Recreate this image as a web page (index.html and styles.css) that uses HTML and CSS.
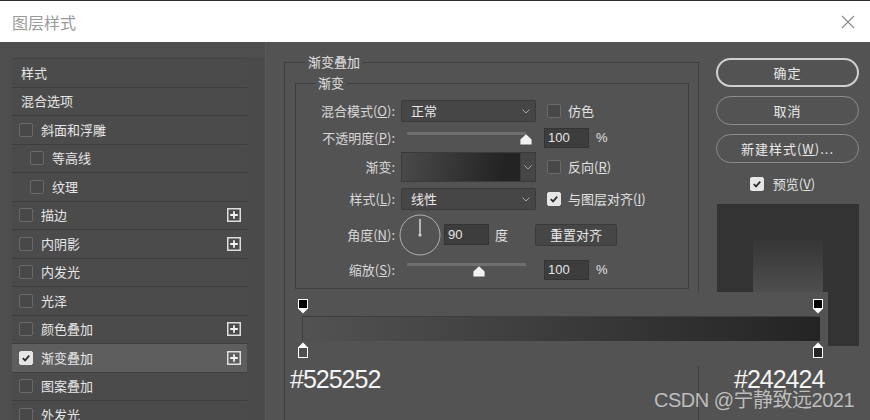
FILE: index.html
```html
<!DOCTYPE html>
<html lang="zh">
<head>
<meta charset="utf-8">
<title>图层样式</title>
<link rel="stylesheet" href="styles.css">
</head>
<body>
<header class="titlebar">
  <span class="title">图层样式</span>
  <svg class="close" viewBox="0 0 14 14"><path d="M1 1 L13 13 M13 1 L1 13" stroke="#8a8a8a" stroke-width="1.1" fill="none"/></svg>
</header>

<div class="main">
  <aside class="left">
    <ul class="list">
      <li class="item plain">样式</li>
      <li class="item plain">混合选项</li>
      <li class="item"><span class="cb"></span><span class="name">斜面和浮雕</span></li>
      <li class="item sub"><span class="cb"></span><span class="name">等高线</span></li>
      <li class="item sub"><span class="cb"></span><span class="name">纹理</span></li>
      <li class="item"><span class="cb"></span><span class="name">描边</span><svg class="plus" viewBox="0 0 14 14"><rect x="0.75" y="0.75" width="12.5" height="12.5" fill="none" stroke="#dedede" stroke-width="1.5"/><path d="M7 3.2 V10.8 M3.2 7 H10.8" stroke="#f2f2f2" stroke-width="1.8"/></svg></li>
      <li class="item"><span class="cb"></span><span class="name">内阴影</span><svg class="plus" viewBox="0 0 14 14"><rect x="0.75" y="0.75" width="12.5" height="12.5" fill="none" stroke="#dedede" stroke-width="1.5"/><path d="M7 3.2 V10.8 M3.2 7 H10.8" stroke="#f2f2f2" stroke-width="1.8"/></svg></li>
      <li class="item"><span class="cb"></span><span class="name">内发光</span></li>
      <li class="item"><span class="cb"></span><span class="name">光泽</span></li>
      <li class="item"><span class="cb"></span><span class="name">颜色叠加</span><svg class="plus" viewBox="0 0 14 14"><rect x="0.75" y="0.75" width="12.5" height="12.5" fill="none" stroke="#dedede" stroke-width="1.5"/><path d="M7 3.2 V10.8 M3.2 7 H10.8" stroke="#f2f2f2" stroke-width="1.8"/></svg></li>
      <li class="item active"><span class="cb on"><svg viewBox="0 0 14 14"><path d="M3.2 7.2 L5.9 9.8 L10.8 4.3" fill="none" stroke="#2c2c2c" stroke-width="2"/></svg></span><span class="name">渐变叠加</span><svg class="plus" viewBox="0 0 14 14"><rect x="0.75" y="0.75" width="12.5" height="12.5" fill="none" stroke="#dedede" stroke-width="1.5"/><path d="M7 3.2 V10.8 M3.2 7 H10.8" stroke="#f2f2f2" stroke-width="1.8"/></svg></li>
      <li class="item"><span class="cb"></span><span class="name">图案叠加</span></li>
      <li class="item"><span class="cb"></span><span class="name">外发光</span></li>
    </ul>
    <div class="scroll"></div>
  </aside>

  <section class="middle">
    <fieldset class="outer">
      <legend>渐变叠加</legend>
      <fieldset class="inner">
        <legend>渐变</legend>
        <div class="rows">
          <div class="row r1">
            <span class="lbl">混合模式(<u>O</u>):</span>
            <div class="select"><span>正常</span><svg class="chev" viewBox="0 0 8 5"><path d="M0.5 0.5 L4 4 L7.5 0.5" fill="none" stroke="#a8a8a8" stroke-width="1"/></svg></div>
            <span class="cb mid"></span><span class="opt">仿色</span>
          </div>
          <div class="row r2">
            <span class="lbl">不透明度(<u>P</u>):</span>
            <div class="slider"><div class="track"></div><svg class="thumb" style="left:119px" viewBox="0 0 12 11"><path d="M6 0.3 L11.6 5.5 V10.6 H0.4 V5.5 Z" fill="#f2f2f2"/></svg></div>
            <span class="num">100</span><span class="unit">%</span>
          </div>
          <div class="row r3">
            <span class="lbl">渐变:</span>
            <div class="gradbox"><div class="swatch"></div><div class="gchev"><svg class="chev" viewBox="0 0 8 5"><path d="M0.5 0.5 L4 4 L7.5 0.5" fill="none" stroke="#a8a8a8" stroke-width="1"/></svg></div></div>
            <span class="cb mid"></span><span class="opt">反向(<u>R</u>)</span>
          </div>
          <div class="row r4">
            <span class="lbl">样式(<u>L</u>):</span>
            <div class="select"><span>线性</span><svg class="chev" viewBox="0 0 8 5"><path d="M0.5 0.5 L4 4 L7.5 0.5" fill="none" stroke="#a8a8a8" stroke-width="1"/></svg></div>
            <span class="cb mid on"><svg viewBox="0 0 14 14"><path d="M3.2 7.2 L5.9 9.8 L10.8 4.3" fill="none" stroke="#2c2c2c" stroke-width="2"/></svg></span><span class="opt">与图层对齐(<u>I</u>)</span>
          </div>
          <div class="row r5">
            <span class="lbl">角度(<u>N</u>):</span>
            <svg class="dial" viewBox="0 0 42 42"><circle cx="21" cy="21" r="20" fill="none" stroke="#b0b0b0" stroke-width="1"/><path d="M21 21 V5" stroke="#cfcfcf" stroke-width="1.6"/><circle cx="21" cy="21" r="1.6" fill="#cfcfcf"/></svg>
            <span class="num n90">90</span><span class="deg">度</span>
            <span class="btn-reset">重置对齐</span>
          </div>
          <div class="row r6">
            <span class="lbl">缩放(<u>S</u>):</span>
            <div class="slider"><div class="track"></div><svg class="thumb" style="left:72px" viewBox="0 0 12 11"><path d="M6 0.3 L11.6 5.5 V10.6 H0.4 V5.5 Z" fill="#f2f2f2"/></svg></div>
            <span class="num">100</span><span class="unit">%</span>
          </div>
        </div>
      </fieldset>
    </fieldset>
  </section>

  <aside class="right">
    <button class="pill primary">确定</button>
    <button class="pill">取消</button>
    <button class="pill">新建样式(<u>W</u>)...</button>
    <div class="preview-row"><span class="cb on"><svg viewBox="0 0 14 14"><path d="M3.2 7.2 L5.9 9.8 L10.8 4.3" fill="none" stroke="#2c2c2c" stroke-width="2"/></svg></span><span>预览(<u>V</u>)</span></div>
    <div class="preview"><div class="layer"></div></div>
  </aside>
</div>

<div class="editor">
  <div class="stops top">
    <svg class="stop" viewBox="0 0 12 15"><rect x="1.5" y="0.5" width="9" height="9" fill="#000" stroke="#fff" stroke-width="1"/><path d="M1.5 10 H10.5 L6 14.5 Z" fill="#fff"/></svg>
    <svg class="stop" viewBox="0 0 12 15"><rect x="1.5" y="0.5" width="9" height="9" fill="#000" stroke="#fff" stroke-width="1"/><path d="M1.5 10 H10.5 L6 14.5 Z" fill="#fff"/></svg>
  </div>
  <div class="bar"></div>
  <div class="stops bottom">
    <svg class="stop" viewBox="0 0 12 16"><path d="M6 0.5 L10.5 5 H1.5 Z" fill="#fff"/><rect x="1.5" y="5.5" width="9" height="10" fill="#4f4f4f" stroke="#fff" stroke-width="1"/></svg>
    <svg class="stop" viewBox="0 0 12 16"><path d="M6 0.5 L10.5 5 H1.5 Z" fill="#fff"/><rect x="1.5" y="5.5" width="9" height="10" fill="#262626" stroke="#fff" stroke-width="1"/></svg>
  </div>
</div>

<div class="hex hex-a">#525252</div>
<div class="hex hex-b">#242424</div>
<div class="watermark">CSDN @宁静致远2021</div>
</body>
</html>
```

FILE: styles.css
```css
* { box-sizing: border-box; margin: 0; padding: 0; }
html, body { width: 870px; height: 420px; overflow: hidden; }
body {
  position: relative;
  background: #535353;
  font-family: "Noto Sans CJK SC", "Noto Sans", sans-serif;
  font-size: 13px;
  line-height: 16px;
  color: #e2e2e2;
}
u { text-decoration: underline; text-underline-offset: 1px; }

/* title bar */
.titlebar {
  height: 42px;
  background: #ffffff;
  border-top: 1px solid #2e2e2e;
  display: flex;
  align-items: center;
  justify-content: space-between;
  padding: 0 15px 0 12px;
}
.title { font-size: 16px; line-height: 20px; color: #9a9a9a; }
.close { width: 14px; height: 14px; }

.main { display: flex; height: 378px; }

/* left list */
.left {
  width: 266px;
  display: flex;
  padding: 16px 0 0 12px;
  background: #4e4e4e;
  border-right: 1px solid #5a5a5a;
}
.list {
  list-style: none;
  width: 235px;
  border-top: 1px solid #444;
}
.item {
  height: 28.5px;
  display: flex;
  align-items: center;
  padding: 0 6px 0 7px;
  background: #4b4b4b;
  border-bottom: 1px solid #3d3d3d;
  color: #e6e6e6;
}
.item.plain { padding-left: 9px; }
.item.sub { padding-left: 18px; }
.item.active { background: #5e5e5e; }
.item .name { flex: 1; margin-left: 8px; }
.plus { width: 14px; height: 14px; }
.scroll { width: 18px; background: #4a4a4a; }

.cb {
  width: 14px;
  height: 14px;
  flex: none;
  border: 1px solid #6a6a6a;
  border-radius: 2px;
  background: #484848;
  display: flex;
}
.cb svg { width: 12px; height: 12px; }
.cb.on { background: #e6e6e6; border-color: #e6e6e6; }

/* middle */
.middle { padding: 12px 0 0 18px; }
fieldset { border: 1px solid #3e3e3e; min-width: 0; }
legend { font-size: 13px; line-height: 16px; padding: 0 3px; color: #e2e2e2; }
.outer { width: 415px; height: 380px; padding: 0 9px 0 10px; }
.outer > legend { margin-left: 10px; }
.inner { margin-top: 5px; width: 394px; }
.inner > legend { margin-left: 19px; }
.rows { display: flex; flex-direction: column; padding: 9px 0 8px; }
.row { display: flex; align-items: center; }
.r1 { height: 22px; }
.r2 { height: 20px; margin-top: 6px; align-items: flex-start; }
.r3 { height: 30px; margin-top: 4px; }
.r4 { height: 22px; margin-top: 6px; }
.r5 { height: 41px; margin-top: 4px; }
.r6 { height: 20px; margin-top: 5px; align-items: flex-start; }
.lbl { width: 99px; margin-right: 6px; text-align: right; color: #d8d8d8; flex: none; }
.r2 .lbl, .r6 .lbl { line-height: 20px; }

.select {
  width: 135px;
  height: 22px;
  display: flex;
  align-items: center;
  justify-content: space-between;
  padding: 0 5px 0 9px;
  background: #464646;
  border: 1px solid #3b3b3b;
  border-radius: 2px;
  color: #e8e8e8;
}
.chev { width: 8px; height: 5px; }
.cb.mid { margin-left: 11px; }
.opt { margin-left: 7px; color: #e2e2e2; }

.slider { position: relative; width: 135px; height: 20px; }
.track { width: 119px; height: 3px; margin: 4px 0 0 6px; background: #6f6f6f; border-radius: 1px; }
.r6 .track { margin-top: 3px; }
.thumb { position: absolute; top: 6px; width: 12px; height: 11px; }
.num {
  width: 45px;
  height: 20px;
  margin-left: 8px;
  padding-left: 3px;
  background: #3d3d3d;
  border: 1px solid #343434;
  font-family: "Liberation Sans", Arial, sans-serif;
  font-size: 13px;
  line-height: 18px;
  color: #e4e4e4;
}
.unit { margin-left: 7px; line-height: 20px; font-family: "Liberation Sans", Arial, sans-serif; }

.gradbox { width: 135px; height: 30px; display: flex; border: 1px solid #3b3b3b; }
.swatch { flex: 1; background: linear-gradient(100deg, #4a4a4a, #232323 85%); }
.gchev { width: 15px; background: #464646; border-left: 1px solid #3b3b3b; display: flex; align-items: center; justify-content: center; }

.dial { width: 42px; height: 42px; margin-left: -2px; }
.n90 { margin-left: 3px; height: 21px; line-height: 19px; }
.deg { margin-left: 6px; }
.btn-reset {
  margin-left: 27px;
  width: 82px;
  height: 22px;
  display: flex;
  align-items: center;
  justify-content: center;
  background: #464646;
  border: 1px solid #3b3b3b;
  border-radius: 2px;
  color: #e6e6e6;
}

/* right column */
.right { width: 143px; margin-left: 17px; padding-top: 16px; display: flex; flex-direction: column; }
.pill {
  height: 29px;
  margin-bottom: 9px;
  border: 1px solid #8c8c8c;
  border-radius: 15px;
  background: transparent;
  color: #e8e8e8;
  font-family: "Noto Sans CJK SC", "Noto Sans", sans-serif;
  font-size: 13px;
  letter-spacing: 1px;
}
.pill.primary { border: 2px solid #cfcfcf; }
.preview-row { margin-top: 5px; height: 14px; display: flex; align-items: center; justify-content: center; gap: 9px; padding-right: 10px; }
.preview { margin: 13px 0 0 1px; width: 142px; height: 142px; background: #333333; padding: 36px; }
.layer { width: 70px; height: 70px; background: linear-gradient(#363636, #565656); }

/* gradient editor strip overlay */
.editor {
  position: absolute;
  left: 287px;
  top: 292px;
  width: 541px;
  height: 74px;
  background: #535353;
  padding: 7px 0 0 10px;
}
.stops { width: 527px; display: flex; justify-content: space-between; }
.stops.top { height: 15px; }
.stops.bottom { height: 16px; margin-top: 1px; }
.stop { width: 12px; height: 15px; }
.stops.bottom .stop { height: 16px; }
.bar {
  width: 518px;
  height: 25px;
  margin: 2px 0 0 5px;
  border-top: 1px solid #3e3e3e;
  border-left: 1px solid #3e3e3e;
  background: linear-gradient(to right, #525252, #242424);
}

.hex {
  position: absolute;
  top: 364px;
  font-family: "Liberation Sans", Arial, sans-serif;
  font-size: 25px;
  line-height: 30px;
  letter-spacing: -1px;
  color: #f4f4f4;
}
.hex-a { left: 290px; }
.hex-b { left: 734px; }
.watermark {
  position: absolute;
  left: 654px;
  top: 388px;
  font-family: "Liberation Sans", "Noto Sans CJK SC", sans-serif;
  font-size: 20px;
  line-height: 24px;
  letter-spacing: -0.5px;
  color: rgba(220, 220, 220, 0.78);
}
```
